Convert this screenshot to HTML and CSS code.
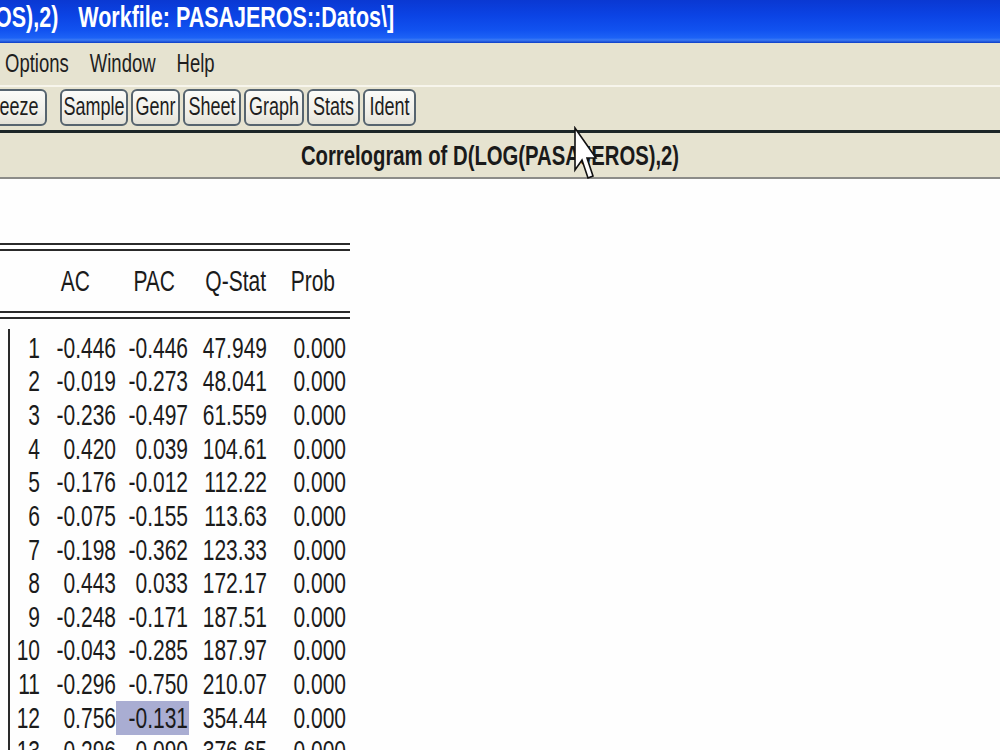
FILE: index.html
```html
<!DOCTYPE html>
<html>
<head>
<meta charset="utf-8">
<title>Correlogram</title>
<link rel="stylesheet" href="styles.css">
</head>
<body>
<div class="screen">
  <div class="titlebar">
    <span class="t title-a">OS),2)</span>
    <span class="t title-b">Workfile: PASAJEROS::Datos\]</span>
  </div>
  <div class="menubar">
    <span class="t">Options</span>
    <span class="t">Window</span>
    <span class="t">Help</span>
  </div>
  <div class="sep-light"></div>
  <div class="toolbar">
    <div class="btn btn-freeze"><span class="t">reeze</span></div>
    <div class="btn btn-sample"><span class="t">Sample</span></div>
    <div class="btn btn-genr"><span class="t">Genr</span></div>
    <div class="btn btn-sheet"><span class="t">Sheet</span></div>
    <div class="btn btn-graph"><span class="t">Graph</span></div>
    <div class="btn btn-stats"><span class="t">Stats</span></div>
    <div class="btn btn-ident"><span class="t">Ident</span></div>
  </div>
  <div class="caption"><span class="t">Correlogram of D(LOG(PASAJEROS),2)</span></div>
  <div class="content">
    <div class="table">
      <div class="dline"></div>
      <div class="head">
        <div class="hc"></div>
        <div class="hc h-ac"><span class="t">AC</span></div>
        <div class="hc h-pac"><span class="t">PAC</span></div>
        <div class="hc h-q"><span class="t">Q-Stat</span></div>
        <div class="hc h-p"><span class="t">Prob</span></div>
      </div>
      <div class="dline"></div>
      <div class="rows">
        <div class="row"><div class="c"><span class="t">1</span></div><div class="c"><span class="t">-0.446</span></div><div class="c"><span class="t">-0.446</span></div><div class="c"><span class="t">47.949</span></div><div class="c"><span class="t">0.000</span></div></div>
        <div class="row"><div class="c"><span class="t">2</span></div><div class="c"><span class="t">-0.019</span></div><div class="c"><span class="t">-0.273</span></div><div class="c"><span class="t">48.041</span></div><div class="c"><span class="t">0.000</span></div></div>
        <div class="row"><div class="c"><span class="t">3</span></div><div class="c"><span class="t">-0.236</span></div><div class="c"><span class="t">-0.497</span></div><div class="c"><span class="t">61.559</span></div><div class="c"><span class="t">0.000</span></div></div>
        <div class="row"><div class="c"><span class="t">4</span></div><div class="c"><span class="t">0.420</span></div><div class="c"><span class="t">0.039</span></div><div class="c"><span class="t">104.61</span></div><div class="c"><span class="t">0.000</span></div></div>
        <div class="row"><div class="c"><span class="t">5</span></div><div class="c"><span class="t">-0.176</span></div><div class="c"><span class="t">-0.012</span></div><div class="c"><span class="t">112.22</span></div><div class="c"><span class="t">0.000</span></div></div>
        <div class="row"><div class="c"><span class="t">6</span></div><div class="c"><span class="t">-0.075</span></div><div class="c"><span class="t">-0.155</span></div><div class="c"><span class="t">113.63</span></div><div class="c"><span class="t">0.000</span></div></div>
        <div class="row"><div class="c"><span class="t">7</span></div><div class="c"><span class="t">-0.198</span></div><div class="c"><span class="t">-0.362</span></div><div class="c"><span class="t">123.33</span></div><div class="c"><span class="t">0.000</span></div></div>
        <div class="row"><div class="c"><span class="t">8</span></div><div class="c"><span class="t">0.443</span></div><div class="c"><span class="t">0.033</span></div><div class="c"><span class="t">172.17</span></div><div class="c"><span class="t">0.000</span></div></div>
        <div class="row"><div class="c"><span class="t">9</span></div><div class="c"><span class="t">-0.248</span></div><div class="c"><span class="t">-0.171</span></div><div class="c"><span class="t">187.51</span></div><div class="c"><span class="t">0.000</span></div></div>
        <div class="row"><div class="c"><span class="t">10</span></div><div class="c"><span class="t">-0.043</span></div><div class="c"><span class="t">-0.285</span></div><div class="c"><span class="t">187.97</span></div><div class="c"><span class="t">0.000</span></div></div>
        <div class="row"><div class="c"><span class="t">11</span></div><div class="c"><span class="t">-0.296</span></div><div class="c"><span class="t">-0.750</span></div><div class="c"><span class="t">210.07</span></div><div class="c"><span class="t">0.000</span></div></div>
        <div class="row"><div class="c"><span class="t">12</span></div><div class="c"><span class="t">0.756</span></div><div class="c selected"><span class="t">-0.131</span></div><div class="c"><span class="t">354.44</span></div><div class="c"><span class="t">0.000</span></div></div>
        <div class="row"><div class="c"><span class="t">13</span></div><div class="c"><span class="t">0.296</span></div><div class="c"><span class="t">0.090</span></div><div class="c"><span class="t">376.65</span></div><div class="c"><span class="t">0.000</span></div></div>
      </div>
    </div>
  </div>
  <svg class="cursor" width="26" height="56" viewBox="0 0 26 56">
    <polygon points="2,2 2,44 9,34 15,52 20,50 14,32 23,32" fill="#ffffff" stroke="#111111" stroke-width="1.6" stroke-linejoin="miter"/>
  </svg>
</div>
</body>
</html>
```
FILE: styles.css
```css
* { box-sizing: border-box; margin: 0; padding: 0; }
html, body { width: 1000px; height: 750px; overflow: hidden; background: #ffffff; }
body { font-family: "Liberation Sans", Arial, sans-serif; color: #1b1b1b; }

.screen {
  position: relative;
  width: 1000px;
  height: 750px;
  overflow: hidden;
  display: flex;
  flex-direction: column;
}

.t { display: inline-block; transform: scaleY(1.4); white-space: pre; }

/* title bar */
.titlebar {
  height: 43px;
  flex: none;
  display: flex;
  align-items: center;
  padding-bottom: 8px;
  background: linear-gradient(#0a38d2 0%, #0b43e4 35%, #1152f0 70%, #1c62f6 88%, #3b7af4 93%, #0c3cc6 100%);
  color: #ffffff;
  font-weight: bold;
  font-size: 21.5px;
  white-space: nowrap;
}
.title-a { margin-left: -5px; }
.title-b { margin-left: 20px; }

/* menu bar */
.menubar {
  height: 42px;
  flex: none;
  display: flex;
  align-items: center;
  gap: 21px;
  padding-left: 5px;
  background: #e6e3d0;
  font-size: 18.5px;
  color: #1e1e1e;
}
.sep-light { height: 2px; flex: none; background: #f7f5ec; }

/* toolbar */
.toolbar {
  height: 43px;
  flex: none;
  display: flex;
  align-items: flex-start;
  gap: 3px;
  padding-top: 2px;
  background: #e6e3d0;
}
.btn {
  height: 37px;
  display: flex;
  align-items: center;
  justify-content: center;
  border: 2px solid #56646f;
  border-radius: 6px;
  background: linear-gradient(#fbfbf8, #eeede6 70%, #e3e1d6);
  font-size: 18px;
  color: #1e1e1e;
  flex: none;
}
.btn-freeze { width: 62px; margin-left: -15px; }
.btn-sample { width: 68px; margin-left: 10px; }
.btn-genr { width: 49px; }
.btn-sheet { width: 58px; }
.btn-graph { width: 60px; }
.btn-stats { width: 53px; }
.btn-ident { width: 53px; }

/* caption */
.caption {
  height: 49px;
  flex: none;
  display: flex;
  align-items: center;
  justify-content: center;
  padding-right: 20px;
  background: #e6e3d0;
  border-top: 3px solid #1c2627;
  border-bottom: 2px solid #8c8c88;
  font-weight: bold;
  font-size: 20.3px;
  color: #1a1a1a;
}

/* content */
.content { flex: 1; background: #fefefe; }
.table { width: 350px; margin-top: 64px; }

.dline {
  height: 8px;
  border-top: 2px solid #2a2a2a;
  border-bottom: 2px solid #2a2a2a;
}

.head, .row {
  display: grid;
  grid-template-columns: 30px 76px 73px 78px 79px;
}
.head { height: 60px; padding-left: 10px; align-items: center; font-size: 21px; }
.hc { text-align: right; }
.h-ac { padding-right: 26px; }
.h-pac { padding-right: 14px; }
.h-q { padding-right: 1px; }
.h-p { padding-right: 11px; }

.rows {
  margin-top: 10px;
  margin-left: 8px;
  padding-top: 2px;
  border-left: 2px solid #2a2a2a;
  font-size: 21px;
}
.row { height: 33.64px; }
.c {
  display: flex;
  align-items: center;
  justify-content: flex-end;
}
.row .c:nth-child(3) { padding-right: 1px; }
.c.selected { background: #a9add2; }

.cursor { position: absolute; left: 573px; top: 126px; }
```
